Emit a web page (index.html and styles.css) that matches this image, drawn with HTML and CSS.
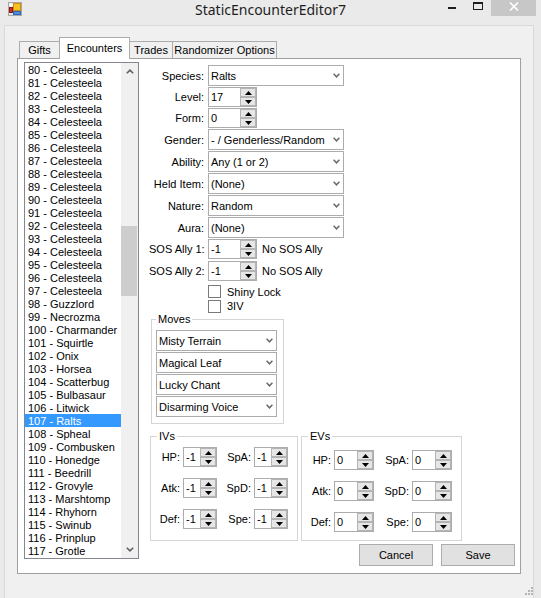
FILE: index.html
```html
<!DOCTYPE html>
<html>
<head>
  <title>StaticEncounterEditor7</title>
  <meta charset="UTF-8">
  <link rel="stylesheet" href="styles.css">
</head>
<body>
  <div class="window">
    <div class="titlebar">
      <svg class="app-icon" width="14" height="14" viewBox="0 0 14 14">
        <rect x="0.5" y="0.5" width="13" height="13" fill="#e4e4e4" stroke="#a8a8a8"/>
        <rect x="1.5" y="1.5" width="3" height="3" fill="#ffffff"/>
        <rect x="5.5" y="1.5" width="7" height="7" fill="#f6c21c" stroke="#d08a10"/>
        <rect x="1.5" y="5.5" width="3" height="5" fill="#d42a2a" stroke="#8e1a1a"/>
        <rect x="5.5" y="9.5" width="7" height="3" fill="#4a8ee6" stroke="#2c64b8"/>
      </svg>
      <div class="title">StaticEncounterEditor7</div>
      <div class="caption-buttons">
        <div class="caption-btn min"><span class="min-glyph"></span></div>
        <div class="caption-btn max"><span class="max-glyph"></span></div>
        <div class="caption-btn close">
          <svg width="10" height="9" viewBox="0 0 10 9">
            <path d="M1 0.5 L9 8.5 M9 0.5 L1 8.5" stroke="#ffffff" stroke-width="1.6"/>
          </svg>
        </div>
      </div>
    </div>

    <div class="client">
      <div class="tabs">
        <div class="tab tab-gifts">Gifts</div>
        <div class="tab tab-encounters active">Encounters</div>
        <div class="tab tab-trades">Trades</div>
        <div class="tab tab-random">Randomizer Options</div>
      </div>

      <div class="tab-page">
        <div class="listbox">
          <div class="list-items">
            <div class="list-item">80 - Celesteela</div>
            <div class="list-item">81 - Celesteela</div>
            <div class="list-item">82 - Celesteela</div>
            <div class="list-item">83 - Celesteela</div>
            <div class="list-item">84 - Celesteela</div>
            <div class="list-item">85 - Celesteela</div>
            <div class="list-item">86 - Celesteela</div>
            <div class="list-item">87 - Celesteela</div>
            <div class="list-item">88 - Celesteela</div>
            <div class="list-item">89 - Celesteela</div>
            <div class="list-item">90 - Celesteela</div>
            <div class="list-item">91 - Celesteela</div>
            <div class="list-item">92 - Celesteela</div>
            <div class="list-item">93 - Celesteela</div>
            <div class="list-item">94 - Celesteela</div>
            <div class="list-item">95 - Celesteela</div>
            <div class="list-item">96 - Celesteela</div>
            <div class="list-item">97 - Celesteela</div>
            <div class="list-item">98 - Guzzlord</div>
            <div class="list-item">99 - Necrozma</div>
            <div class="list-item">100 - Charmander</div>
            <div class="list-item">101 - Squirtle</div>
            <div class="list-item">102 - Onix</div>
            <div class="list-item">103 - Horsea</div>
            <div class="list-item">104 - Scatterbug</div>
            <div class="list-item">105 - Bulbasaur</div>
            <div class="list-item">106 - Litwick</div>
            <div class="list-item selected">107 - Ralts</div>
            <div class="list-item">108 - Spheal</div>
            <div class="list-item">109 - Combusken</div>
            <div class="list-item">110 - Honedge</div>
            <div class="list-item">111 - Beedrill</div>
            <div class="list-item">112 - Grovyle</div>
            <div class="list-item">113 - Marshtomp</div>
            <div class="list-item">114 - Rhyhorn</div>
            <div class="list-item">115 - Swinub</div>
            <div class="list-item">116 - Prinplup</div>
            <div class="list-item">117 - Grotle</div>
          </div>
          <div class="vscroll">
            <div class="scroll-arrow">
              <svg width="8" height="5" viewBox="0 0 8 5"><path d="M0.8 4.3 L4 1.2 L7.2 4.3" fill="none" stroke="#606060" stroke-width="1.6"/></svg>
            </div>
            <div class="scroll-track"><div class="scroll-thumb"></div></div>
            <div class="scroll-arrow">
              <svg width="8" height="5" viewBox="0 0 8 5"><path d="M0.8 0.7 L4 3.8 L7.2 0.7" fill="none" stroke="#606060" stroke-width="1.6"/></svg>
            </div>
          </div>
        </div>

        <div class="editor">
          <div class="field">
            <span class="field-label">Species:</span>
            <div class="combo wide"><span>Ralts</span><svg class="drop" width="7" height="5" viewBox="0 0 7 5"><path d="M0.6 0.8 L3.5 3.8 L6.4 0.8" fill="none" stroke="#6a6a6a" stroke-width="1.5"/></svg></div>
          </div>
          <div class="field">
            <span class="field-label">Level:</span>
            <div class="numeric num-main"><span class="value">17</span><div class="spin"><div class="spin-btn"><svg width="7" height="4" viewBox="0 0 7 4"><path d="M0 4 L3.5 0 L7 4 Z" fill="#000"/></svg></div><div class="spin-btn"><svg width="7" height="4" viewBox="0 0 7 4"><path d="M0 0 L3.5 4 L7 0 Z" fill="#000"/></svg></div></div></div>
          </div>
          <div class="field">
            <span class="field-label">Form:</span>
            <div class="numeric num-main"><span class="value">0</span><div class="spin"><div class="spin-btn"><svg width="7" height="4" viewBox="0 0 7 4"><path d="M0 4 L3.5 0 L7 4 Z" fill="#000"/></svg></div><div class="spin-btn"><svg width="7" height="4" viewBox="0 0 7 4"><path d="M0 0 L3.5 4 L7 0 Z" fill="#000"/></svg></div></div></div>
          </div>
          <div class="field">
            <span class="field-label">Gender:</span>
            <div class="combo wide"><span>- / Genderless/Random</span><svg class="drop" width="7" height="5" viewBox="0 0 7 5"><path d="M0.6 0.8 L3.5 3.8 L6.4 0.8" fill="none" stroke="#6a6a6a" stroke-width="1.5"/></svg></div>
          </div>
          <div class="field">
            <span class="field-label">Ability:</span>
            <div class="combo wide"><span>Any (1 or 2)</span><svg class="drop" width="7" height="5" viewBox="0 0 7 5"><path d="M0.6 0.8 L3.5 3.8 L6.4 0.8" fill="none" stroke="#6a6a6a" stroke-width="1.5"/></svg></div>
          </div>
          <div class="field">
            <span class="field-label">Held Item:</span>
            <div class="combo wide"><span>(None)</span><svg class="drop" width="7" height="5" viewBox="0 0 7 5"><path d="M0.6 0.8 L3.5 3.8 L6.4 0.8" fill="none" stroke="#6a6a6a" stroke-width="1.5"/></svg></div>
          </div>
          <div class="field">
            <span class="field-label">Nature:</span>
            <div class="combo wide"><span>Random</span><svg class="drop" width="7" height="5" viewBox="0 0 7 5"><path d="M0.6 0.8 L3.5 3.8 L6.4 0.8" fill="none" stroke="#6a6a6a" stroke-width="1.5"/></svg></div>
          </div>
          <div class="field">
            <span class="field-label">Aura:</span>
            <div class="combo wide"><span>(None)</span><svg class="drop" width="7" height="5" viewBox="0 0 7 5"><path d="M0.6 0.8 L3.5 3.8 L6.4 0.8" fill="none" stroke="#6a6a6a" stroke-width="1.5"/></svg></div>
          </div>
          <div class="field sos-first">
            <span class="field-label">SOS Ally 1:</span>
            <div class="numeric num-main"><span class="value">-1</span><div class="spin"><div class="spin-btn"><svg width="7" height="4" viewBox="0 0 7 4"><path d="M0 4 L3.5 0 L7 4 Z" fill="#000"/></svg></div><div class="spin-btn"><svg width="7" height="4" viewBox="0 0 7 4"><path d="M0 0 L3.5 4 L7 0 Z" fill="#000"/></svg></div></div></div>
            <span class="note">No SOS Ally</span>
          </div>
          <div class="field">
            <span class="field-label">SOS Ally 2:</span>
            <div class="numeric num-main"><span class="value">-1</span><div class="spin"><div class="spin-btn"><svg width="7" height="4" viewBox="0 0 7 4"><path d="M0 4 L3.5 0 L7 4 Z" fill="#000"/></svg></div><div class="spin-btn"><svg width="7" height="4" viewBox="0 0 7 4"><path d="M0 0 L3.5 4 L7 0 Z" fill="#000"/></svg></div></div></div>
            <span class="note">No SOS Ally</span>
          </div>

          <div class="check-row first-check"><span class="checkbox"></span>Shiny Lock</div>
          <div class="check-row last-check"><span class="checkbox"></span>3IV</div>

          <fieldset class="group moves">
            <legend>Moves</legend>
            <div class="combo move"><span>Misty Terrain</span><svg class="drop" width="7" height="5" viewBox="0 0 7 5"><path d="M0.6 0.8 L3.5 3.8 L6.4 0.8" fill="none" stroke="#6a6a6a" stroke-width="1.5"/></svg></div>
            <div class="combo move"><span>Magical Leaf</span><svg class="drop" width="7" height="5" viewBox="0 0 7 5"><path d="M0.6 0.8 L3.5 3.8 L6.4 0.8" fill="none" stroke="#6a6a6a" stroke-width="1.5"/></svg></div>
            <div class="combo move"><span>Lucky Chant</span><svg class="drop" width="7" height="5" viewBox="0 0 7 5"><path d="M0.6 0.8 L3.5 3.8 L6.4 0.8" fill="none" stroke="#6a6a6a" stroke-width="1.5"/></svg></div>
            <div class="combo move"><span>Disarming Voice</span><svg class="drop" width="7" height="5" viewBox="0 0 7 5"><path d="M0.6 0.8 L3.5 3.8 L6.4 0.8" fill="none" stroke="#6a6a6a" stroke-width="1.5"/></svg></div>
          </fieldset>

          <div class="stat-groups">
            <fieldset class="group ivs">
              <legend>IVs</legend>
              <div class="stat-grid iv-grid">
                <span class="stat-label">HP:</span>
                <div class="numeric"><span class="value">-1</span><div class="spin"><div class="spin-btn"><svg width="7" height="4" viewBox="0 0 7 4"><path d="M0 4 L3.5 0 L7 4 Z" fill="#000"/></svg></div><div class="spin-btn"><svg width="7" height="4" viewBox="0 0 7 4"><path d="M0 0 L3.5 4 L7 0 Z" fill="#000"/></svg></div></div></div>
                <span class="stat-label">SpA:</span>
                <div class="numeric"><span class="value">-1</span><div class="spin"><div class="spin-btn"><svg width="7" height="4" viewBox="0 0 7 4"><path d="M0 4 L3.5 0 L7 4 Z" fill="#000"/></svg></div><div class="spin-btn"><svg width="7" height="4" viewBox="0 0 7 4"><path d="M0 0 L3.5 4 L7 0 Z" fill="#000"/></svg></div></div></div>
                <span class="stat-label">Atk:</span>
                <div class="numeric"><span class="value">-1</span><div class="spin"><div class="spin-btn"><svg width="7" height="4" viewBox="0 0 7 4"><path d="M0 4 L3.5 0 L7 4 Z" fill="#000"/></svg></div><div class="spin-btn"><svg width="7" height="4" viewBox="0 0 7 4"><path d="M0 0 L3.5 4 L7 0 Z" fill="#000"/></svg></div></div></div>
                <span class="stat-label">SpD:</span>
                <div class="numeric"><span class="value">-1</span><div class="spin"><div class="spin-btn"><svg width="7" height="4" viewBox="0 0 7 4"><path d="M0 4 L3.5 0 L7 4 Z" fill="#000"/></svg></div><div class="spin-btn"><svg width="7" height="4" viewBox="0 0 7 4"><path d="M0 0 L3.5 4 L7 0 Z" fill="#000"/></svg></div></div></div>
                <span class="stat-label">Def:</span>
                <div class="numeric"><span class="value">-1</span><div class="spin"><div class="spin-btn"><svg width="7" height="4" viewBox="0 0 7 4"><path d="M0 4 L3.5 0 L7 4 Z" fill="#000"/></svg></div><div class="spin-btn"><svg width="7" height="4" viewBox="0 0 7 4"><path d="M0 0 L3.5 4 L7 0 Z" fill="#000"/></svg></div></div></div>
                <span class="stat-label">Spe:</span>
                <div class="numeric"><span class="value">-1</span><div class="spin"><div class="spin-btn"><svg width="7" height="4" viewBox="0 0 7 4"><path d="M0 4 L3.5 0 L7 4 Z" fill="#000"/></svg></div><div class="spin-btn"><svg width="7" height="4" viewBox="0 0 7 4"><path d="M0 0 L3.5 4 L7 0 Z" fill="#000"/></svg></div></div></div>
              </div>
            </fieldset>
            <fieldset class="group evs">
              <legend>EVs</legend>
              <div class="stat-grid ev-grid">
                <span class="stat-label">HP:</span>
                <div class="numeric"><span class="value">0</span><div class="spin"><div class="spin-btn"><svg width="7" height="4" viewBox="0 0 7 4"><path d="M0 4 L3.5 0 L7 4 Z" fill="#000"/></svg></div><div class="spin-btn"><svg width="7" height="4" viewBox="0 0 7 4"><path d="M0 0 L3.5 4 L7 0 Z" fill="#000"/></svg></div></div></div>
                <span class="stat-label">SpA:</span>
                <div class="numeric"><span class="value">0</span><div class="spin"><div class="spin-btn"><svg width="7" height="4" viewBox="0 0 7 4"><path d="M0 4 L3.5 0 L7 4 Z" fill="#000"/></svg></div><div class="spin-btn"><svg width="7" height="4" viewBox="0 0 7 4"><path d="M0 0 L3.5 4 L7 0 Z" fill="#000"/></svg></div></div></div>
                <span class="stat-label">Atk:</span>
                <div class="numeric"><span class="value">0</span><div class="spin"><div class="spin-btn"><svg width="7" height="4" viewBox="0 0 7 4"><path d="M0 4 L3.5 0 L7 4 Z" fill="#000"/></svg></div><div class="spin-btn"><svg width="7" height="4" viewBox="0 0 7 4"><path d="M0 0 L3.5 4 L7 0 Z" fill="#000"/></svg></div></div></div>
                <span class="stat-label">SpD:</span>
                <div class="numeric"><span class="value">0</span><div class="spin"><div class="spin-btn"><svg width="7" height="4" viewBox="0 0 7 4"><path d="M0 4 L3.5 0 L7 4 Z" fill="#000"/></svg></div><div class="spin-btn"><svg width="7" height="4" viewBox="0 0 7 4"><path d="M0 0 L3.5 4 L7 0 Z" fill="#000"/></svg></div></div></div>
                <span class="stat-label">Def:</span>
                <div class="numeric"><span class="value">0</span><div class="spin"><div class="spin-btn"><svg width="7" height="4" viewBox="0 0 7 4"><path d="M0 4 L3.5 0 L7 4 Z" fill="#000"/></svg></div><div class="spin-btn"><svg width="7" height="4" viewBox="0 0 7 4"><path d="M0 0 L3.5 4 L7 0 Z" fill="#000"/></svg></div></div></div>
                <span class="stat-label">Spe:</span>
                <div class="numeric"><span class="value">0</span><div class="spin"><div class="spin-btn"><svg width="7" height="4" viewBox="0 0 7 4"><path d="M0 4 L3.5 0 L7 4 Z" fill="#000"/></svg></div><div class="spin-btn"><svg width="7" height="4" viewBox="0 0 7 4"><path d="M0 0 L3.5 4 L7 0 Z" fill="#000"/></svg></div></div></div>
              </div>
            </fieldset>
          </div>

          <div class="actions">
            <div class="button">Cancel</div>
            <div class="button">Save</div>
          </div>
        </div>
      </div>

      <div class="statusbar">
        <svg class="grip" width="9" height="9" viewBox="0 0 9 9" fill="#b5b5b5">
          <rect x="7" y="1" width="2" height="2"/>
          <rect x="4" y="4" width="2" height="2"/><rect x="7" y="4" width="2" height="2"/>
          <rect x="1" y="7" width="2" height="2"/><rect x="4" y="7" width="2" height="2"/><rect x="7" y="7" width="2" height="2"/>
        </svg>
      </div>
    </div>
  </div>
</body>
</html>
```

FILE: styles.css
```css
* {
  box-sizing: border-box;
}

body {
  margin: 0;
  width: 541px;
  height: 598px;
  overflow: hidden;
  background-color: #eaeaea;
  font-family: "Liberation Sans", Arial, sans-serif;
  font-size: 11px;
  color: #000000;
}

.window {
  display: flex;
  flex-direction: column;
  height: 598px;
}

/* title bar */

.titlebar {
  flex: none;
  height: 25px;
  display: grid;
  grid-template-columns: 1fr auto 1fr;
  align-items: start;
}

.app-icon {
  display: block;
  margin: 2px 0 0 8px;
}

.title {
  font-family: "Noto Sans", "Open Sans", sans-serif;
  font-size: 14px;
  line-height: 20px;
  color: #1e1e1e;
}

.caption-buttons {
  justify-self: end;
  display: flex;
  margin-right: 5px;
}

.caption-btn {
  height: 16px;
  display: flex;
  justify-content: center;
  align-items: flex-start;
}

.caption-btn.min {
  width: 25px;
  padding-top: 7px;
}

.caption-btn.max {
  width: 27px;
  padding-top: 2px;
}

.caption-btn.close {
  width: 45px;
  padding-top: 2px;
  background-color: #c7c7c7;
}

.min-glyph {
  width: 8px;
  height: 2px;
  background-color: #1e1e1e;
}

.max-glyph {
  width: 10px;
  height: 8px;
  border: 1px solid #1e1e1e;
  border-top-width: 2px;
}

/* client area */

.client {
  flex: 1;
  margin: 0 7px 0 4px;
  background-color: #f0f0f0;
  border: 1px solid #dadada;
  border-bottom: none;
  display: flex;
  flex-direction: column;
}

.tabs {
  position: relative;
  z-index: 1;
  display: flex;
  align-items: flex-end;
  height: 21px;
  margin: 11px 0 0 14px;
}

.tab {
  height: 17px;
  border: 1px solid #acacac;
  border-bottom: none;
  background-color: #f0f0f0;
  display: flex;
  align-items: center;
  justify-content: center;
  white-space: nowrap;
}

.tab + .tab {
  margin-left: -1px;
}

.tab-gifts { width: 41px; }
.tab-encounters { width: 71px; }
.tab-trades { width: 44px; }
.tab-random { width: 105px; }

.tab.active {
  height: 22px;
  margin-bottom: -1px;
  padding-bottom: 2px;
  background-color: #ffffff;
}

.tab-page {
  flex: none;
  margin-left: 12px;
  width: 504px;
  height: 516px;
  background-color: #ffffff;
  border: 1px solid #a0a0a0;
  display: flex;
  align-items: flex-start;
}

/* list box */

.listbox {
  margin: 3px 0 0 6px;
  width: 115px;
  height: 497px;
  border: 1px solid #828790;
  display: flex;
}

.list-items {
  flex: 1;
  overflow: hidden;
}

.list-item {
  height: 13px;
  line-height: 15px;
  padding-left: 3px;
  white-space: nowrap;
}

.list-item.selected {
  background-color: #3399ff;
  color: #ffffff;
}

.vscroll {
  width: 17px;
  background-color: #f0f0f0;
  display: flex;
  flex-direction: column;
}

.scroll-arrow {
  height: 17px;
  display: flex;
  align-items: center;
  justify-content: center;
}

.scroll-track {
  flex: 1;
}

.scroll-thumb {
  margin-top: 146px;
  width: 16px;
  height: 70px;
  background-color: #cdcdcd;
}

/* editor */

.editor {
  flex: 1;
  margin-left: 10px;
  padding-top: 6px;
  display: flex;
  flex-direction: column;
}

.field {
  display: flex;
  align-items: center;
  margin-bottom: 1px;
}

.field.sos-first {
  margin-bottom: 2px;
}

.field-label {
  width: 55px;
  margin-right: 4px;
  text-align: right;
  white-space: nowrap;
}

.note {
  margin-left: 5px;
}

.combo {
  height: 21px;
  border: 1px solid #acacac;
  background-color: #ffffff;
  display: flex;
  align-items: center;
  justify-content: space-between;
  padding: 0 3px 0 2px;
  white-space: nowrap;
}

.combo.wide {
  width: 136px;
}

.combo.move {
  width: 121px;
}

.drop {
  display: block;
}

.numeric {
  height: 20px;
  border: 1px solid #acacac;
  background-color: #ffffff;
  display: flex;
  justify-content: space-between;
}

.num-main {
  width: 49px;
}

.numeric .value {
  padding-left: 2px;
  line-height: 18px;
}

.spin {
  width: 16px;
  display: flex;
  flex-direction: column;
}

.spin-btn {
  flex: 1;
  border: 1px solid #b4b4b4;
  background-color: #e6e6e6;
  display: flex;
  align-items: center;
  justify-content: center;
}

.spin-btn svg {
  display: block;
}

.check-row {
  display: flex;
  align-items: center;
  height: 15px;
  margin-left: 59px;
}

.check-row.first-check {
  margin-top: 2px;
}

.check-row.last-check {
  height: 14px;
}

.checkbox {
  width: 13px;
  height: 13px;
  margin-right: 6px;
  border: 1px solid #7a7a7a;
  background-color: #ffffff;
}

/* group boxes */

.group {
  margin: 0;
  min-width: 0;
  border: 1px solid #d5d5d5;
}

.group legend {
  padding: 0 2px;
  line-height: 13px;
}

.moves {
  margin-left: 2px;
  width: 133px;
  padding: 4px 6px 6px 4px;
  display: flex;
  flex-direction: column;
  gap: 1px;
}

.stat-groups {
  display: flex;
  align-items: stretch;
  gap: 3px;
  margin: 6px 0 0 1px;
}

.stat-groups legend {
  margin-left: 6px;
}

.ivs {
  width: 148px;
  padding: 4px 8px 11px 0;
}

.evs {
  width: 161px;
  padding: 7px 8px 8px 0;
}

.stat-grid {
  display: grid;
  row-gap: 11px;
  column-gap: 3px;
  align-items: center;
}

.iv-grid {
  grid-template-columns: 29px 34px 31px 34px;
}

.ev-grid {
  grid-template-columns: 29px 40px 32px 40px;
}

.stat-label {
  text-align: right;
  white-space: nowrap;
}

/* buttons */

.actions {
  display: flex;
  justify-content: flex-end;
  gap: 8px;
  margin-top: 3px;
  padding-right: 5px;
}

.button {
  width: 74px;
  height: 22px;
  border: 1px solid #adadad;
  background-color: #e1e1e1;
  display: flex;
  align-items: center;
  justify-content: center;
}

.statusbar {
  flex: 1;
  display: flex;
  justify-content: flex-end;
  align-items: flex-end;
}

.grip {
  display: block;
  margin: 0 0 3px 0;
}
```
